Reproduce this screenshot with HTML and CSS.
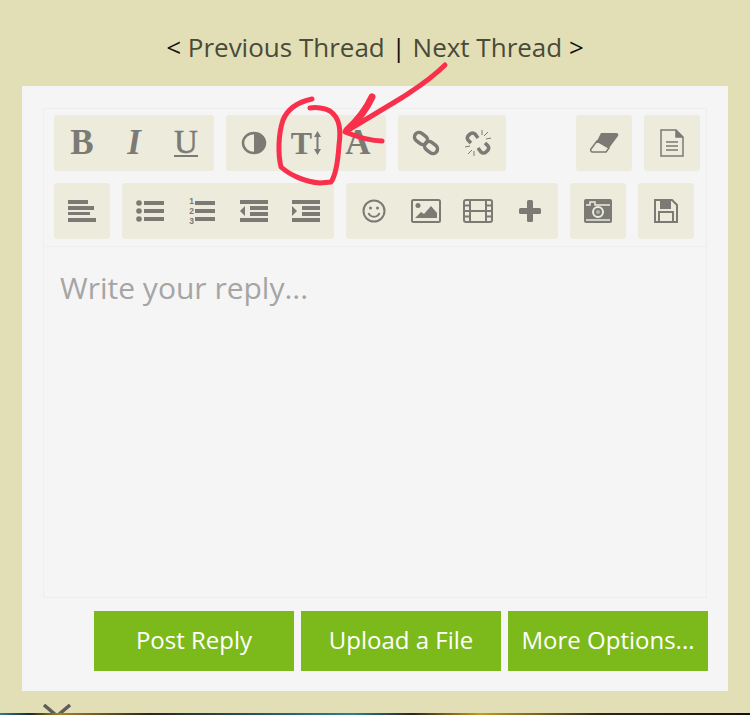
FILE: index.html
```html
<!DOCTYPE html>
<html lang="en">
<head>
    <meta charset="UTF-8">
    <title>Reply</title>
    <link rel="stylesheet" href="styles.css">
</head>
<body>
    <nav class="thread-nav">&lt; <a>Previous Thread</a> | <a>Next Thread</a> &gt;</nav>

    <main class="card">
        <div class="editor">
            <div class="toolbar">
                <div class="row">
                    <div class="group">
                        <button class="btn letter">B</button>
                        <button class="btn letter italic">I</button>
                        <button class="btn letter"><span class="under">U</span></button>
                    </div>
                    <div class="group">
                        <button class="btn"><svg width="26" height="24" viewBox="0 0 26 24"><ellipse cx="13" cy="12" rx="11" ry="10" fill="none" stroke="#7b7a75" stroke-width="2.500"/><path d="M13 2a11 10 0 0 1 0 20z" fill="#7b7a75"/></svg></button>
                        <button class="btn letter size">T<svg class="size-arrow" width="7" height="24" viewBox="0 0 7 24"><path d="M3.500 0L7 6H4.500v12H7l-3.500 6L0 18h2.500V6H0z" fill="#7b7a75"/></svg></button>
                        <button class="btn letter">A</button>
                    </div>
                    <div class="group">
                        <button class="btn"><svg width="28" height="26" viewBox="0 0 28 26" fill="none" stroke="#7b7a75" stroke-width="3.500"><rect x="2" y="4" width="14" height="9" rx="4.500" transform="rotate(38 9 8.500)"/><rect x="12" y="13" width="14" height="9" rx="4.500" transform="rotate(38 19 17.500)"/></svg></button>
                        <button class="btn"><svg width="28" height="28" viewBox="0 0 28 28" fill="none" stroke="#7b7a75"><path d="M14 9l-3-4a3.500 3.500 0 0 0-5 0L4 7a3.500 3.500 0 0 0 0 4l3 3M14 19l3 4a3.500 3.500 0 0 0 5 0l2-2a3.500 3.500 0 0 0 0-4l-3-3" stroke-width="3.500"/><path d="M18 1v5M24 3l-4 4M27 9l-5 1M1 18l5-1M4 25l4-4M10 27v-5" stroke-width="1"/></svg></button>
                    </div>
                    <div class="spacer"></div>
                    <div class="group">
                        <button class="btn"><svg width="30" height="20" viewBox="0 0 30 20"><path d="M12 0h15a2 2 0 0 1 2 3L20 15 8 8z" fill="#7b7a75"/><path d="M8 8l12 7-3 4H3a2 2 0 0 1-1-3z" fill="none" stroke="#7b7a75" stroke-width="1.500"/></svg></button>
                    </div>
                    <div class="group">
                        <button class="btn"><svg width="24" height="28" viewBox="0 0 24 28" fill="none" stroke="#7b7a75" stroke-width="1.500"><path d="M1 1h15l7 7v19H1z"/><path d="M16 1v7h7" fill="#7b7a75"/><path d="M6 13h12M6 17h12M6 21h12"/></svg></button>
                    </div>
                </div>
                <div class="row">
                    <div class="group">
                        <button class="btn"><svg width="28" height="22" viewBox="0 0 28 22" fill="#7b7a75"><rect width="20" height="4"/><rect y="6" width="26" height="4"/><rect y="12" width="22" height="3"/><rect y="18" width="28" height="4"/></svg></button>
                    </div>
                    <div class="group">
                        <button class="btn"><svg width="28" height="22" viewBox="0 0 28 22" fill="#7b7a75"><circle cx="3" cy="3" r="2.800"/><circle cx="3" cy="11" r="2.800"/><circle cx="3" cy="19" r="2.800"/><rect x="8" y="1" width="20" height="4"/><rect x="8" y="9" width="20" height="4"/><rect x="8" y="17" width="20" height="4"/></svg></button>
                        <button class="btn"><span class="nums"><span>1</span><span>2</span><span>3</span></span><svg width="20" height="22" viewBox="0 0 20 22" fill="#7b7a75"><rect y="1" width="20" height="4"/><rect y="9" width="20" height="4"/><rect y="17" width="20" height="4"/></svg></button>
                        <button class="btn"><svg width="28" height="22" viewBox="0 0 28 22" fill="#7b7a75"><rect width="28" height="4"/><rect x="10" y="6" width="18" height="4"/><rect x="10" y="12" width="18" height="4"/><rect y="18" width="28" height="4"/><path d="M5 6v10L0 11z"/></svg></button>
                        <button class="btn"><svg width="28" height="22" viewBox="0 0 28 22" fill="#7b7a75"><rect width="28" height="4"/><rect x="10" y="6" width="18" height="4"/><rect x="10" y="12" width="18" height="4"/><rect y="18" width="28" height="4"/><path d="M0 6v10l5-5z"/></svg></button>
                    </div>
                    <div class="group">
                        <button class="btn"><svg width="24" height="24" viewBox="0 0 24 24" fill="none" stroke="#7b7a75" stroke-width="2"><circle cx="12" cy="12" r="10.500"/><path d="M6.500 14c2 5 9 5 11 0"/><circle cx="8.500" cy="9" r="1.500" fill="#7b7a75" stroke="none"/><circle cx="15.500" cy="9" r="1.500" fill="#7b7a75" stroke="none"/></svg></button>
                        <button class="btn"><svg width="30" height="24" viewBox="0 0 30 24"><rect x="1" y="1" width="28" height="22" rx="1.500" fill="none" stroke="#7b7a75" stroke-width="2"/><circle cx="7" cy="6.500" r="2.500" fill="#7b7a75"/><path d="M4 19l6-6 3 2 7-8 6 7v5z" fill="#7b7a75"/></svg></button>
                        <button class="btn"><svg width="30" height="24" viewBox="0 0 30 24" fill="none" stroke="#7b7a75" stroke-width="2"><rect x="1" y="1" width="28" height="22" rx="2"/><path d="M7 1v22M23 1v22M1 6.500h6M1 12h6M1 17.500h6M23 6.500h6M23 12h6M23 17.500h6M7 12h16"/></svg></button>
                        <button class="btn"><svg width="22" height="22" viewBox="0 0 22 22" fill="#7b7a75"><rect x="8" width="6" height="22" rx="1.500"/><rect y="8" width="22" height="6" rx="1.500"/></svg></button>
                    </div>
                    <div class="group">
                        <button class="btn"><svg width="28" height="24" viewBox="0 0 28 24"><rect width="28" height="24" rx="2" fill="#7b7a75"/><path d="M2 6h4V3h5v3h15" fill="none" stroke="#ecebdc" stroke-width="1.500"/><path d="M2 21h24" stroke="#ecebdc" stroke-width="1.500"/><circle cx="14" cy="13" r="5" fill="#7b7a75" stroke="#ecebdc" stroke-width="2"/><circle cx="14" cy="13" r="2" fill="#b5b4aa"/></svg></button>
                    </div>
                    <div class="group">
                        <button class="btn"><svg width="24" height="24" viewBox="0 0 24 24" fill="none" stroke="#7b7a75" stroke-width="2"><path d="M1 1h17l5 5v17H1z"/><path d="M7 1h9v8H7z" fill="#7b7a75"/><path d="M5 23V13h14v10"/></svg></button>
                    </div>
                </div>
            </div>
            <div class="reply">Write your reply...</div>
        </div>
        <div class="actions">
            <button class="action">Post Reply</button>
            <button class="action">Upload a File</button>
            <button class="action">More Options...</button>
        </div>
    </main>

    <svg class="close" width="32" height="12" viewBox="0 0 32 12"><path d="M3 1l26 22M29 1L3 23" stroke="#5f5f58" stroke-width="3.500" fill="none"/></svg>
    <div class="strip"></div>

    <!-- red pen scribble on top of the screenshot -->
    <svg class="scribble" width="750" height="715" viewBox="0 0 750 715" fill="none" stroke="#f9304c" stroke-linecap="round" stroke-linejoin="round">
        <path d="M312 99C298 102 288 108 283 120C278 135 278 155 281 167C290 175 305 182 320 183L331 182C336 175 338 160 339 145C341 130 340 118 330 111C325 108 316 107 310 108" stroke-width="5"/>
        <path d="M445 65C430 80 415 89 403 97L345 132C355 136 368 141 382 141" stroke-width="5"/>
        <path d="M372 97C365 112 356 122 347 130" stroke-width="7"/>
    </svg>
</body>
</html>
```
FILE: styles.css
```css
* {
    box-sizing: border-box;
}
body {
    position: relative;
    margin: 0;
    width: 750px;
    height: 715px;
    overflow: hidden;
    background-color: #e2dfb7;
    font-family: "Open Sans", Arial, sans-serif;
}
.thread-nav {
    height: 86px;
    padding-top: 29px;
    text-align: center;
    font-size: 26px;
    line-height: 36px;
    color: #111;
}
.thread-nav a {
    color: #4a4a38;
}
.card {
    margin: 0 22px;
    width: 706px;
    height: 605px;
    padding: 22px 21px 0;
    background-color: #f5f5f6;
}
.editor {
    height: 490px;
    border: 1px solid #eeeeee;
}
.toolbar {
    height: 138px;
    padding: 6px 6px 0 10px;
    border-bottom: 1px solid #eeeeee;
}
.row {
    display: flex;
    gap: 12px;
    margin-bottom: 12px;
}
.group {
    display: flex;
    height: 56px;
    padding: 0 2px;
    border-radius: 3px;
    background-color: #ecebdc;
}
.spacer {
    width: 58px;
}
.btn {
    display: flex;
    justify-content: center;
    align-items: center;
    width: 52px;
    padding: 0;
    border: none;
    background: none;
    color: #7b7a75;
}
.letter {
    font-family: "Liberation Serif", serif;
    font-size: 35px;
    font-weight: bold;
}
.italic {
    font-style: italic;
}
.under {
    font-size: 33px;
    line-height: 25px;
    font-weight: normal;
    border-bottom: 2px solid #7b7a75;
    -webkit-text-stroke: 0.5px #7b7a75;
}
.size {
    font-size: 32px;
}
.size-arrow {
    margin-left: 2px;
}
.nums {
    display: flex;
    flex-direction: column;
    margin-right: 1px;
    font-family: "Liberation Sans", Arial, sans-serif;
    font-size: 8.500px;
    font-weight: bold;
    line-height: 10px;
}
.reply {
    padding: 21px 16px;
    font-size: 30px;
    line-height: 40px;
    color: #a5a5a5;
}
.actions {
    display: flex;
    justify-content: flex-end;
    gap: 7px;
    margin: 13px -1px 0 0;
}
.action {
    width: 200px;
    height: 60px;
    padding: 0 0 4px;
    border: none;
    background-color: #7cba1c;
    color: #fff;
    font-family: "Open Sans", Arial, sans-serif;
    font-size: 24px;
}
.close {
    position: absolute;
    left: 41px;
    top: 704px;
}
.strip {
    position: absolute;
    left: 0;
    right: 0;
    bottom: 0;
    height: 2px;
    background: linear-gradient(90deg, #2d7d93 0, #1c2a2e 4%, #a97f24 8%, #2a2622 20%, #2a7f96 47%, #2a2622 55%, #c59a1e 64%, #2a2622 80%, #111 100%);
}
.scribble {
    position: absolute;
    left: 0;
    top: 0;
    pointer-events: none;
}
```
